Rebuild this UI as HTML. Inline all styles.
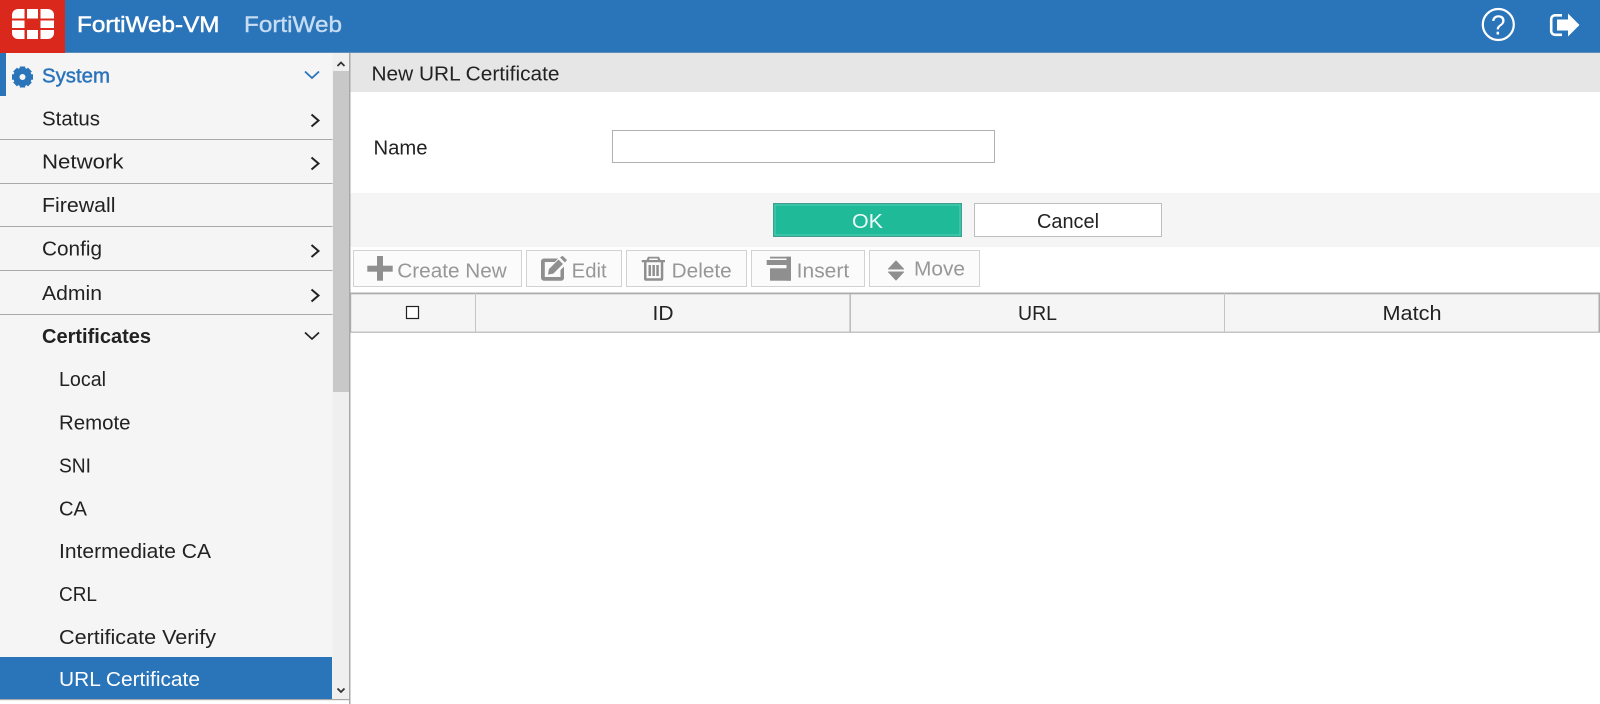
<!DOCTYPE html>
<html><head><meta charset="utf-8"><title>FortiWeb-VM</title>
<style>
html,body{margin:0;padding:0;width:1600px;height:704px;overflow:hidden;background:#fff}
svg{display:block}
text{font-family:"Liberation Sans",sans-serif;font-size:20px;fill:#222}
</style></head><body>
<svg width="1600" height="704" viewBox="0 0 1600 704" xmlns="http://www.w3.org/2000/svg">
<rect width="1600" height="704" fill="#fff"/>
<!-- top bar -->
<rect width="1600" height="53" fill="#2a74b9"/>
<rect y="52" width="1600" height="1.5" fill="#5f8db8"/>
<rect width="65" height="53" fill="#da291c"/>
<g fill="#fff">
<path d="M12 18.500V15a6 6 0 0 1 6-6H24.500V18.500Z"/><rect x="27" y="9" width="11" height="9.500"/><path d="M40.500 9H48a6 6 0 0 1 6 6V18.500H40.500Z"/>
<rect x="12" y="20.500" width="12.500" height="7.500"/><rect x="40.500" y="20.500" width="13.500" height="7.500"/>
<path d="M12 30V33a6 6 0 0 0 6 6H24.500V30Z"/><rect x="27" y="30" width="11" height="9"/><path d="M40.500 30H54V33a6 6 0 0 1-6 6H40.500Z"/>
</g>
<text x="77" y="32" textLength="142.500" lengthAdjust="spacingAndGlyphs" style="font-size:22px;fill:#fff;stroke:#fff;stroke-width:.5px">FortiWeb-VM</text>
<text x="244" y="32" textLength="98" lengthAdjust="spacingAndGlyphs" style="font-size:22px;fill:#c6dcf2;stroke:#c6dcf2;stroke-width:.4px">FortiWeb</text>
<circle cx="1498.300" cy="24.500" r="15.500" fill="none" stroke="#fff" stroke-width="2.200"/>
<text x="1491" y="34.500" textLength="14.500" lengthAdjust="spacingAndGlyphs" style="font-size:28px;fill:#fff">?</text>
<path d="M1562 15.300H1555a3.800 3.800 0 0 0-3.800 3.800V31a3.800 3.800 0 0 0 3.800 3.800H1562" fill="none" stroke="#fff" stroke-width="2.600"/>
<path d="M1557 19.500H1568V13.500L1579.500 25L1568 36.500V30.500H1557Z" fill="#fff"/>
<!-- sidebar -->
<rect y="53" width="332.500" height="646" fill="#f5f5f5"/>
<rect x="332.500" y="53" width="16.500" height="646" fill="#efefef"/>
<rect x="333" y="71" width="16" height="321" fill="#c8c8c8"/>
<rect x="349" y="53" width="1.500" height="651" fill="#a8a8a8"/>
<rect y="699" width="350" height="1.200" fill="#a8a8a8"/>
<path d="M337.500 66L341 62.500L344.500 66" fill="none" stroke="#333" stroke-width="1.800"/>
<path d="M337.500 688.500L341 692L344.500 688.500" fill="none" stroke="#333" stroke-width="1.800"/>
<rect y="53" width="6" height="43" fill="#2a74b9"/>
<!-- gear -->
<g transform="translate(22.500 77)" fill="#2a74b9">
<circle r="6.500" fill="none" stroke="#2a74b9" stroke-width="5.500"/>
<rect x="-2.700" y="-10.500" width="5.400" height="21"/>
<rect x="-2.700" y="-10.500" width="5.400" height="21" transform="rotate(45)"/>
<rect x="-2.700" y="-10.500" width="5.400" height="21" transform="rotate(90)"/>
<rect x="-2.700" y="-10.500" width="5.400" height="21" transform="rotate(135)"/>
<circle r="3" fill="#f5f5f5"/>
</g>
<text x="42" y="82.500" textLength="68" lengthAdjust="spacingAndGlyphs" style="fill:#2a74b9;stroke:#2a74b9;stroke-width:.45px">System</text>
<path d="M305 71.500L312 78L319 71.500" fill="none" stroke="#2a74b9" stroke-width="1.800"/>
<g fill="#a9a9a9">
<rect y="139" width="332.500" height="1"/><rect y="183" width="332.500" height="1"/><rect y="226" width="332.500" height="1"/><rect y="270" width="332.500" height="1"/><rect y="314" width="332.500" height="1"/>
</g>
<g fill="none" stroke="#222" stroke-width="2">
<path d="M311.500 114.500L318.500 120.500L311.500 126.500"/>
<path d="M311.500 157.500L318.500 163.500L311.500 169.500"/>
<path d="M311.500 245L318.500 251L311.500 257"/>
<path d="M311.500 289.500L318.500 295.500L311.500 301.500"/>
<path d="M305 332.500L312 339L319 332.500" stroke-width="1.700"/>
</g>
<text x="42" y="125.500" textLength="58" lengthAdjust="spacingAndGlyphs">Status</text>
<text x="42" y="168.500" textLength="81.500" lengthAdjust="spacingAndGlyphs">Network</text>
<text x="42" y="212" textLength="73.500" lengthAdjust="spacingAndGlyphs">Firewall</text>
<text x="42" y="255.500" textLength="60" lengthAdjust="spacingAndGlyphs">Config</text>
<text x="42" y="300" textLength="60" lengthAdjust="spacingAndGlyphs">Admin</text>
<text x="42" y="343" font-weight="bold" textLength="109" lengthAdjust="spacingAndGlyphs">Certificates</text>
<text x="59" y="386" textLength="47" lengthAdjust="spacingAndGlyphs">Local</text>
<text x="59" y="429.500" textLength="71.500" lengthAdjust="spacingAndGlyphs">Remote</text>
<text x="59" y="472.500" textLength="32" lengthAdjust="spacingAndGlyphs">SNI</text>
<text x="59" y="515.500" textLength="28" lengthAdjust="spacingAndGlyphs">CA</text>
<text x="59" y="558" textLength="152" lengthAdjust="spacingAndGlyphs">Intermediate CA</text>
<text x="59" y="601" textLength="38" lengthAdjust="spacingAndGlyphs">CRL</text>
<text x="59" y="644" textLength="157" lengthAdjust="spacingAndGlyphs">Certificate Verify</text>
<rect y="657" width="332" height="42" fill="#2a74b9"/>
<text x="59" y="686" textLength="141" lengthAdjust="spacingAndGlyphs" style="fill:#fff">URL Certificate</text>
<!-- main -->
<rect x="350.500" y="53" width="1250" height="39" fill="#e6e6e6"/>
<text x="371.500" y="80.500" textLength="188" lengthAdjust="spacingAndGlyphs">New URL Certificate</text>
<text x="373.500" y="154.500" textLength="54" lengthAdjust="spacingAndGlyphs">Name</text>
<rect x="612.500" y="130.500" width="382" height="32" fill="#fff" stroke="#b0b0b0"/>
<rect x="350.500" y="193" width="1250" height="54" fill="#f5f5f5"/>
<rect x="773.500" y="203.500" width="188" height="33" fill="#1fbb99" stroke="#3f9e90"/>
<rect x="775" y="205" width="185" height="30" fill="none" stroke="#55cbb2"/>
<text x="852" y="228" textLength="31" lengthAdjust="spacingAndGlyphs" style="fill:#eefaf7">OK</text>
<rect x="974.500" y="203.500" width="187" height="33" fill="#fff" stroke="#bdbdbd"/>
<text x="1037" y="228" textLength="62" lengthAdjust="spacingAndGlyphs">Cancel</text>
<!-- toolbar -->
<g fill="#fbfbfb" stroke="#d2d2d2">
<rect x="353.500" y="250.500" width="168" height="36"/>
<rect x="526.500" y="250.500" width="95" height="36"/>
<rect x="626.500" y="250.500" width="120" height="36"/>
<rect x="751.500" y="250.500" width="113" height="36"/>
<rect x="869.500" y="250.500" width="110" height="36"/>
</g>
<g fill="#8f8f8f">
<!-- plus -->
<rect x="367.300" y="265.700" width="25.400" height="6"/><rect x="377" y="256" width="6" height="24.700"/>
<!-- edit -->
<path d="M544 258.500H558L555 262H544.800V277H560.500V270L564 266.500V278A2.700 2.700 0 0 1 561.300 280.700H544A3 3 0 0 1 541 277.700V261.500A3 3 0 0 1 544 258.500Z"/>
<path d="M547.500 275L548.500 269L558.500 259L563.500 264L553.500 274Z" stroke="#fbfbfb" stroke-width=".8"/>
<path d="M560 257.500L562.500 255.800L567 260L565 262.500Z"/>
<!-- delete -->
<path d="M648 256.700H659L660.500 260H665V262.300H663.300V278.700A2 2 0 0 1 661.300 280.700H646A2 2 0 0 1 644 278.700V262.300H641.700V260H646.500ZM649.500 258.500L649 260H658L657.500 258.500ZM646.500 262.300V278.200H660.800V262.300Z" fill-rule="evenodd"/>
<rect x="648.500" y="265" width="2.500" height="11"/><rect x="652.400" y="265" width="2.500" height="11"/><rect x="656.300" y="265" width="2.500" height="11"/>
<!-- insert -->
<rect x="770" y="256.700" width="21" height="1.800"/>
<rect x="766.700" y="260" width="24.300" height="5"/>
<rect x="786.500" y="256.700" width="4.500" height="24"/>
<rect x="770" y="268.300" width="21" height="12.400"/>
<!-- move -->
<path d="M896 261L903.500 269H888.500Z" stroke="#8f8f8f" stroke-linejoin="round"/><path d="M896 280L903.500 272H888.500Z" stroke="#8f8f8f" stroke-linejoin="round"/>
</g>
<text x="397.300" y="277.500" textLength="109.500" lengthAdjust="spacingAndGlyphs" style="fill:#979797">Create New</text>
<text x="571.700" y="277.500" textLength="35" lengthAdjust="spacingAndGlyphs" style="fill:#979797">Edit</text>
<text x="671.700" y="277.500" textLength="60" lengthAdjust="spacingAndGlyphs" style="fill:#979797">Delete</text>
<text x="796.700" y="277.500" textLength="52.500" lengthAdjust="spacingAndGlyphs" style="fill:#979797">Insert</text>
<text x="914" y="275.500" textLength="51" lengthAdjust="spacingAndGlyphs" style="fill:#979797">Move</text>
<!-- table header -->
<rect x="351" y="293" width="1249" height="39" fill="#f5f5f5"/>
<rect x="350.500" y="292.500" width="1249.500" height="1.800" fill="#adadad"/>
<rect x="350.500" y="331.500" width="1249.500" height="1.500" fill="#c4c4c4"/>
<rect x="350" y="293" width="1.200" height="39" fill="#adadad"/>
<rect x="475" y="293" width="1" height="39" fill="#c4c4c4"/>
<rect x="849.500" y="293" width="1.300" height="39" fill="#b0b0b0"/>
<rect x="1224" y="293" width="1" height="39" fill="#c4c4c4"/>
<rect x="1598.500" y="293" width="1.500" height="39" fill="#adadad"/>
<rect x="406.500" y="306.500" width="12" height="12" fill="#fff" stroke="#222" stroke-width="1.200"/>
<text x="652.500" y="320" textLength="21" lengthAdjust="spacingAndGlyphs">ID</text>
<text x="1018" y="320" textLength="39" lengthAdjust="spacingAndGlyphs">URL</text>
<text x="1382.500" y="320" textLength="59" lengthAdjust="spacingAndGlyphs">Match</text>
</svg>
</body></html>
